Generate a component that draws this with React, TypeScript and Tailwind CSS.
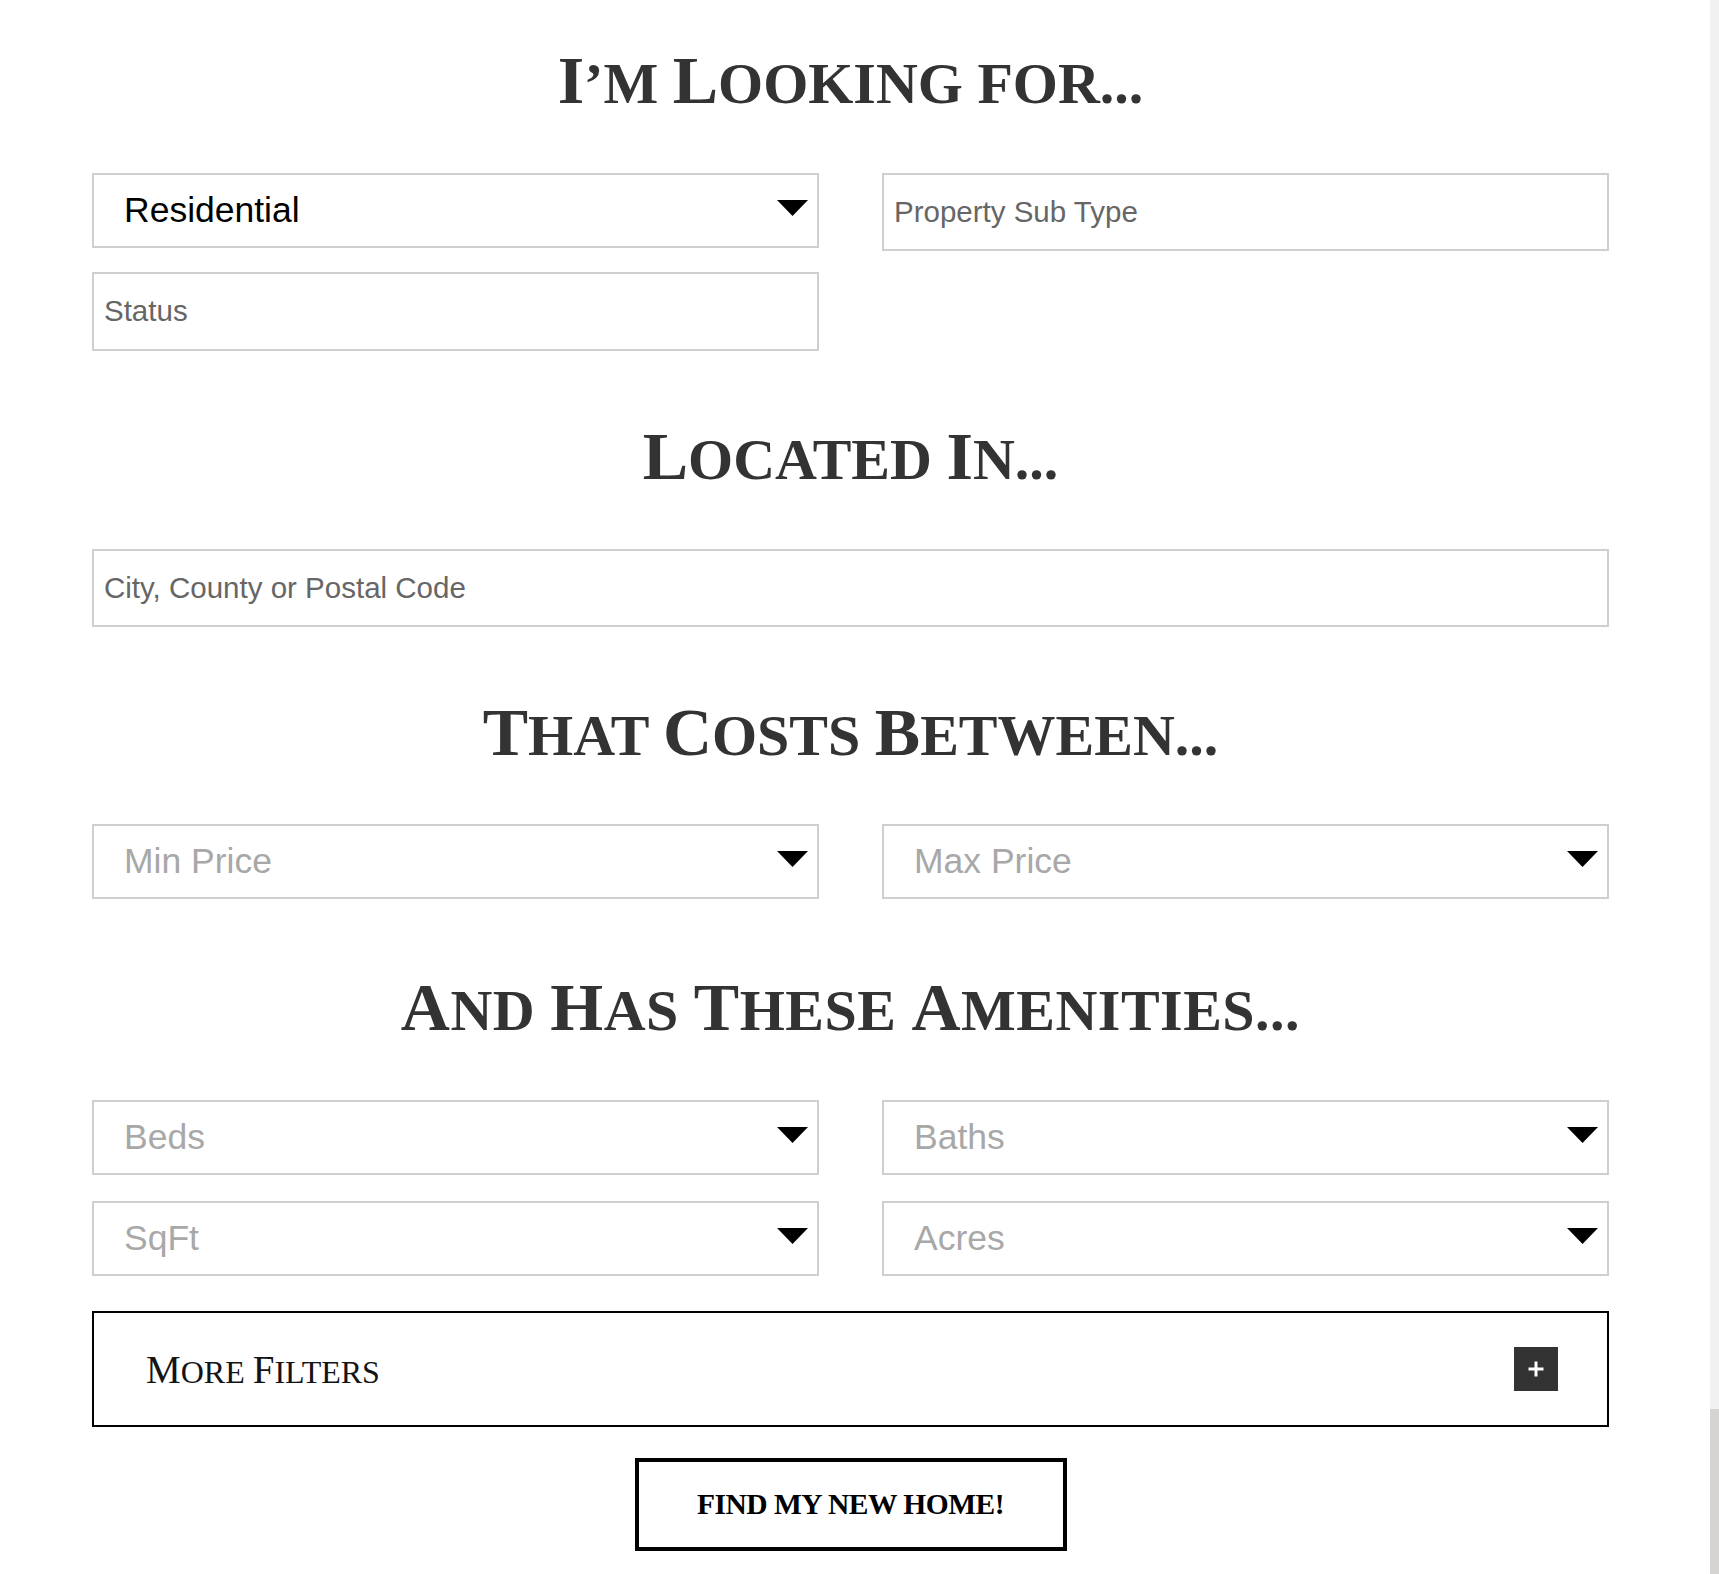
import React from "react";

function SmallCaps({ text, big, small }: { text: string; big: string; small: string }) {
  const segs: { cap: boolean; s: string }[] = [];
  for (const ch of text) {
    const cap = /[A-Z]/.test(ch);
    const last = segs[segs.length - 1];
    if (last && last.cap === cap) last.s += ch;
    else segs.push({ cap, s: ch });
  }
  return (
    <>
      {segs.map((g, i) => (
        <span key={i} className={g.cap ? big : small}>
          {g.s.toUpperCase()}
        </span>
      ))}
    </>
  );
}

function Heading({ text, wide = false }: { text: string; wide?: boolean }) {
  return (
    <h2
      className={
        wide
          ? "h-[68px] whitespace-nowrap text-center font-['Liberation_Serif','Times_New_Roman',serif] text-[68px] font-bold leading-none tracking-[0.5px] text-[#333333]"
          : "h-[68px] whitespace-nowrap text-center font-['Liberation_Serif','Times_New_Roman',serif] text-[68px] font-bold leading-none text-[#333333]"
      }
    >
      <SmallCaps text={text} big="text-[68px]" small="text-[58px]" />
    </h2>
  );
}

function Triangle() {
  return (
    <svg width="31" height="16" viewBox="0 0 31 16" className="-translate-y-[3px] shrink-0">
      <polygon points="0,0 31,0 15.5,16" fill="#000" />
    </svg>
  );
}

function SelectBox({ label, value = false }: { label: string; value?: boolean }) {
  return (
    <div className="flex h-[75px] items-center justify-between border-2 border-[#cfcfcf] bg-white pl-[30px] pr-[9px]">
      <span className={value ? "text-[35.5px] text-black" : "text-[35.5px] text-[#a8a8a8]"}>{label}</span>
      <Triangle />
    </div>
  );
}

function InputBox({ label, tall = false }: { label: string; tall?: boolean }) {
  return (
    <div
      className={
        tall
          ? "flex h-[79px] items-center border-2 border-[#cfcfcf] bg-white pl-[10px]"
          : "flex h-[78px] items-center border-2 border-[#cfcfcf] bg-white pl-[10px]"
      }
    >
      <span className="text-[29.5px] text-[#666666]">{label}</span>
    </div>
  );
}

export default function App() {
  return (
    <div className="flex h-[1574px] w-full overflow-hidden bg-white font-['Liberation_Sans',Arial,sans-serif]">
      <main className="flex-1">
        <div className="ml-[92px] w-[1517px] pt-[46px]">
          <Heading text="I’m Looking for..." />

          <div className="mt-[59px] grid grid-cols-2 gap-x-[63px]">
            <div className="flex flex-col gap-[24px]">
              <SelectBox label="Residential" value />
              <InputBox label="Status" tall />
            </div>
            <div>
              <InputBox label="Property Sub Type" />
            </div>
          </div>

          <div className="mt-[71px]">
            <Heading text="Located In..." />
          </div>

          <div className="mt-[59px]">
            <InputBox label="City, County or Postal Code" />
          </div>

          <div className="mt-[71px]">
            <Heading text="That Costs Between..." />
          </div>

          <div className="mt-[58px] grid grid-cols-2 gap-x-[63px]">
            <SelectBox label="Min Price" />
            <SelectBox label="Max Price" />
          </div>

          <div className="mt-[74px]">
            <Heading text="And Has These Amenities..." wide />
          </div>

          <div className="mt-[59px] grid grid-cols-2 gap-x-[63px] gap-y-[26px]">
            <SelectBox label="Beds" />
            <SelectBox label="Baths" />
            <SelectBox label="SqFt" />
            <SelectBox label="Acres" />
          </div>

          <div className="mt-[35px] flex h-[116px] items-center justify-between border-2 border-black pl-[52px] pr-[49px]">
            <span className="whitespace-nowrap font-['Liberation_Serif','Times_New_Roman',serif] text-[39px] leading-none text-[#141414]">
              <SmallCaps text="More Filters" big="text-[39px]" small="text-[32px]" />
            </span>
            <div className="flex h-[44px] w-[44px] items-center justify-center bg-[#333333]">
              <svg width="16" height="16" viewBox="0 0 16 16">
                <path d="M8 0.5v15M0.5 8h15" stroke="#fff" strokeWidth="3" />
              </svg>
            </div>
          </div>

          <div className="mt-[31px] flex justify-center">
            <button className="flex h-[93px] w-[432px] items-center justify-center border-4 border-black bg-white font-['Liberation_Serif','Times_New_Roman',serif] text-[29.5px] font-bold tracking-[-0.5px] text-black">
              FIND MY NEW HOME!
            </button>
          </div>
        </div>
      </main>
      <div className="flex w-[9px] flex-col bg-[#f1f1f1]">
        <div className="mt-auto h-[165px] bg-[#d6d3d3]" />
      </div>
    </div>
  );
}
